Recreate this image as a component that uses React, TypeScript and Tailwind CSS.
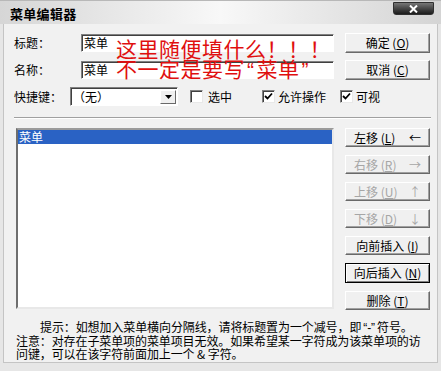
import React from "react";

const font = "font-['Noto_Sans_CJK_SC',sans-serif]";

// classic raised button
const Btn: React.FC<{
  label: string;
  hot: string;
  arrow?: string;
  disabled?: boolean;
  isDefault?: boolean;
  className?: string;
}> = ({ label, hot, arrow, disabled, isDefault, className = "" }) => (
  <div
    className={`w-[85px] h-[19px] flex items-center text-[12px] leading-none bg-[#f0f0f0] ${
      isDefault
        ? "border border-black shadow-[inset_1px_1px_0_#fff,inset_-1px_-1px_0_#808080]"
        : "border border-t-white border-l-white border-r-[#696969] border-b-[#696969] shadow-[inset_-1px_-1px_0_#a0a0a0]"
    } ${arrow ? "justify-between pl-[8px] pr-[8px]" : "justify-center"} ${
      disabled ? "text-[#a6a6a6]" : "text-black"
    } ${className}`}
  >
    <span className="whitespace-nowrap">
      {label} (<span className="underline">{hot}</span>)
    </span>
    {arrow && <span className="text-[12px]">{arrow}</span>}
  </div>
);

const Check: React.FC<{ checked?: boolean }> = ({ checked }) => (
  <div className="w-[13px] h-[13px] bg-white border border-t-[#808080] border-l-[#808080] border-b-[#e8e8e8] border-r-[#e8e8e8] shadow-[inset_1px_1px_0_#404040] flex items-center justify-center">
    {checked && (
      <svg width="9" height="9" viewBox="0 0 9 9">
        <path d="M1 4 L3.5 6.5 L8 1.5" fill="none" stroke="#000" strokeWidth="1.8" />
      </svg>
    )}
  </div>
);

const Sunken = "border border-t-[#808080] border-l-[#808080] border-b-white border-r-white shadow-[inset_1px_1px_0_#404040]";
const quote = "font-['Liberation_Sans',sans-serif] leading-none mx-[2px]";

export default function App() {
  return (
    <div className={`w-[441px] h-[371px] bg-[#e6e6e6] flex flex-col ${font} text-black`}>
      {/* title bar */}
      <div className="h-[24px] shrink-0 flex items-center justify-between pl-[10px] pr-[7px] bg-linear-to-r from-[#d6d6d6] via-[#f8f8f8] to-[#d4d4d4] border-t border-[#b8b8b8]">
        <span className="text-[13px] font-bold pt-[2px] tracking-[0.3px]">菜单编辑器</span>
        <div className="self-start w-[41px] h-[13px] mt-[1px] rounded-b-[3px] bg-linear-to-b from-[#777] to-[#1c1c1c] border border-[#303030] flex items-center justify-center">
          <svg width="9" height="8" viewBox="0 0 9 8">
            <path d="M1 0.5 L8 7.5 M8 0.5 L1 7.5" stroke="#fff" strokeWidth="2" />
          </svg>
        </div>
      </div>

      {/* body */}
      <div className="mx-[3px] h-[339px] bg-[#f1f1f1] border-l border-r border-b border-[#c4c4c4] text-[12px]">
        <div className="pt-[9px] pl-[10px]">
          {/* title / name rows with the red note written over them */}
          <div className="relative">
            <div className="flex items-center h-[20px]">
              <span className="w-[67px]">标题：</span>
              <div className={`w-[253px] h-[18px] bg-white ${Sunken} pl-[2px] flex items-center`}>菜单</div>
              <Btn label="确定" hot="O" className="ml-[11px] h-[20px]" />
            </div>
            <div className="flex items-center h-[20px] mt-[7px]">
              <span className="w-[67px]">名称：</span>
              <div className={`w-[253px] h-[18px] bg-white ${Sunken} pl-[2px] flex items-center`}>菜单</div>
              <Btn label="取消" hot="C" className="ml-[11px] h-[20px]" />
            </div>
            <div className="absolute left-[102px] top-[5px] text-[21px] leading-[20px] tracking-[0.5px] text-[#e00f0f] whitespace-nowrap pointer-events-none">
              这里随便填什么！！！
            </div>
            <div className="absolute left-[102px] top-[25px] text-[21px] leading-[20px] tracking-[0.5px] text-[#e00f0f] whitespace-nowrap pointer-events-none">
              不一定是要写<span className={quote}>“</span>菜单<span className={quote}>”</span>
            </div>
          </div>

          {/* shortcut row */}
          <div className="flex items-center h-[19px] mt-[7px]">
            <span className="w-[56px]">快捷键：</span>
            <div className={`w-[108px] h-[19px] bg-white ${Sunken} flex items-center justify-between pl-[2px] pr-[1px]`}>
              <span>（无）</span>
              <div className="w-[16px] h-[14px] bg-[#f0f0f0] border border-t-white border-l-white border-r-[#696969] border-b-[#696969] flex items-center justify-center">
                <svg width="7" height="4" viewBox="0 0 7 4">
                  <path d="M0 0 H7 L3.5 4 Z" fill="#000" />
                </svg>
              </div>
            </div>
            <div className="ml-[12px]"><Check /></div>
            <span className="ml-[5px]">选中</span>
            <div className="ml-[30px]"><Check checked /></div>
            <span className="ml-[3px]">允许操作</span>
            <div className="ml-[14px]"><Check checked /></div>
            <span className="ml-[3px]">可视</span>
          </div>

          {/* separator */}
          <div className="w-[417px] h-[2px] mt-[11px] border-t border-[#a0a0a0] border-b border-b-white" />

          {/* list + buttons */}
          <div className="flex mt-[9px]">
            <div className="ml-[2px] w-[318px] h-[181px] bg-white border-2 border-t-[#9a9a9a] border-l-[#6e6e6e] border-b-[#e8e8e8] border-r-[#e8e8e8]">
              <div className="h-[14px] bg-[#2a62c4] text-white text-[12px] leading-[14px] pl-[1px]">菜单</div>
            </div>
            <div className="ml-[11px] flex flex-col gap-[8px]">
              <Btn label="左移" hot="L" arrow="←" />
              <Btn label="右移" hot="R" arrow="→" disabled />
              <Btn label="上移" hot="U" arrow="↑" disabled />
              <Btn label="下移" hot="D" arrow="↓" disabled />
              <Btn label="向前插入" hot="I" />
              <Btn label="向后插入" hot="N" isDefault className="h-[20px]" />
              <Btn label="删除" hot="T" />
            </div>
          </div>
        </div>

        {/* hint */}
        <div className="mt-[10px] pl-[12px] text-[12px] leading-[13px] whitespace-nowrap tracking-[-0.1px]">
          <div className="pl-[24px]">
            提示：如想加入菜单横向分隔线，请将标题置为一个减号，即<span className={quote}>“-”</span>符号。
          </div>
          <div>注意：对存在子菜单项的菜单项目无效。如果希望某一字符成为该菜单项的访</div>
          <div>问键，可以在该字符前面加上一个 &amp; 字符。</div>
        </div>
      </div>
    </div>
  );
}
